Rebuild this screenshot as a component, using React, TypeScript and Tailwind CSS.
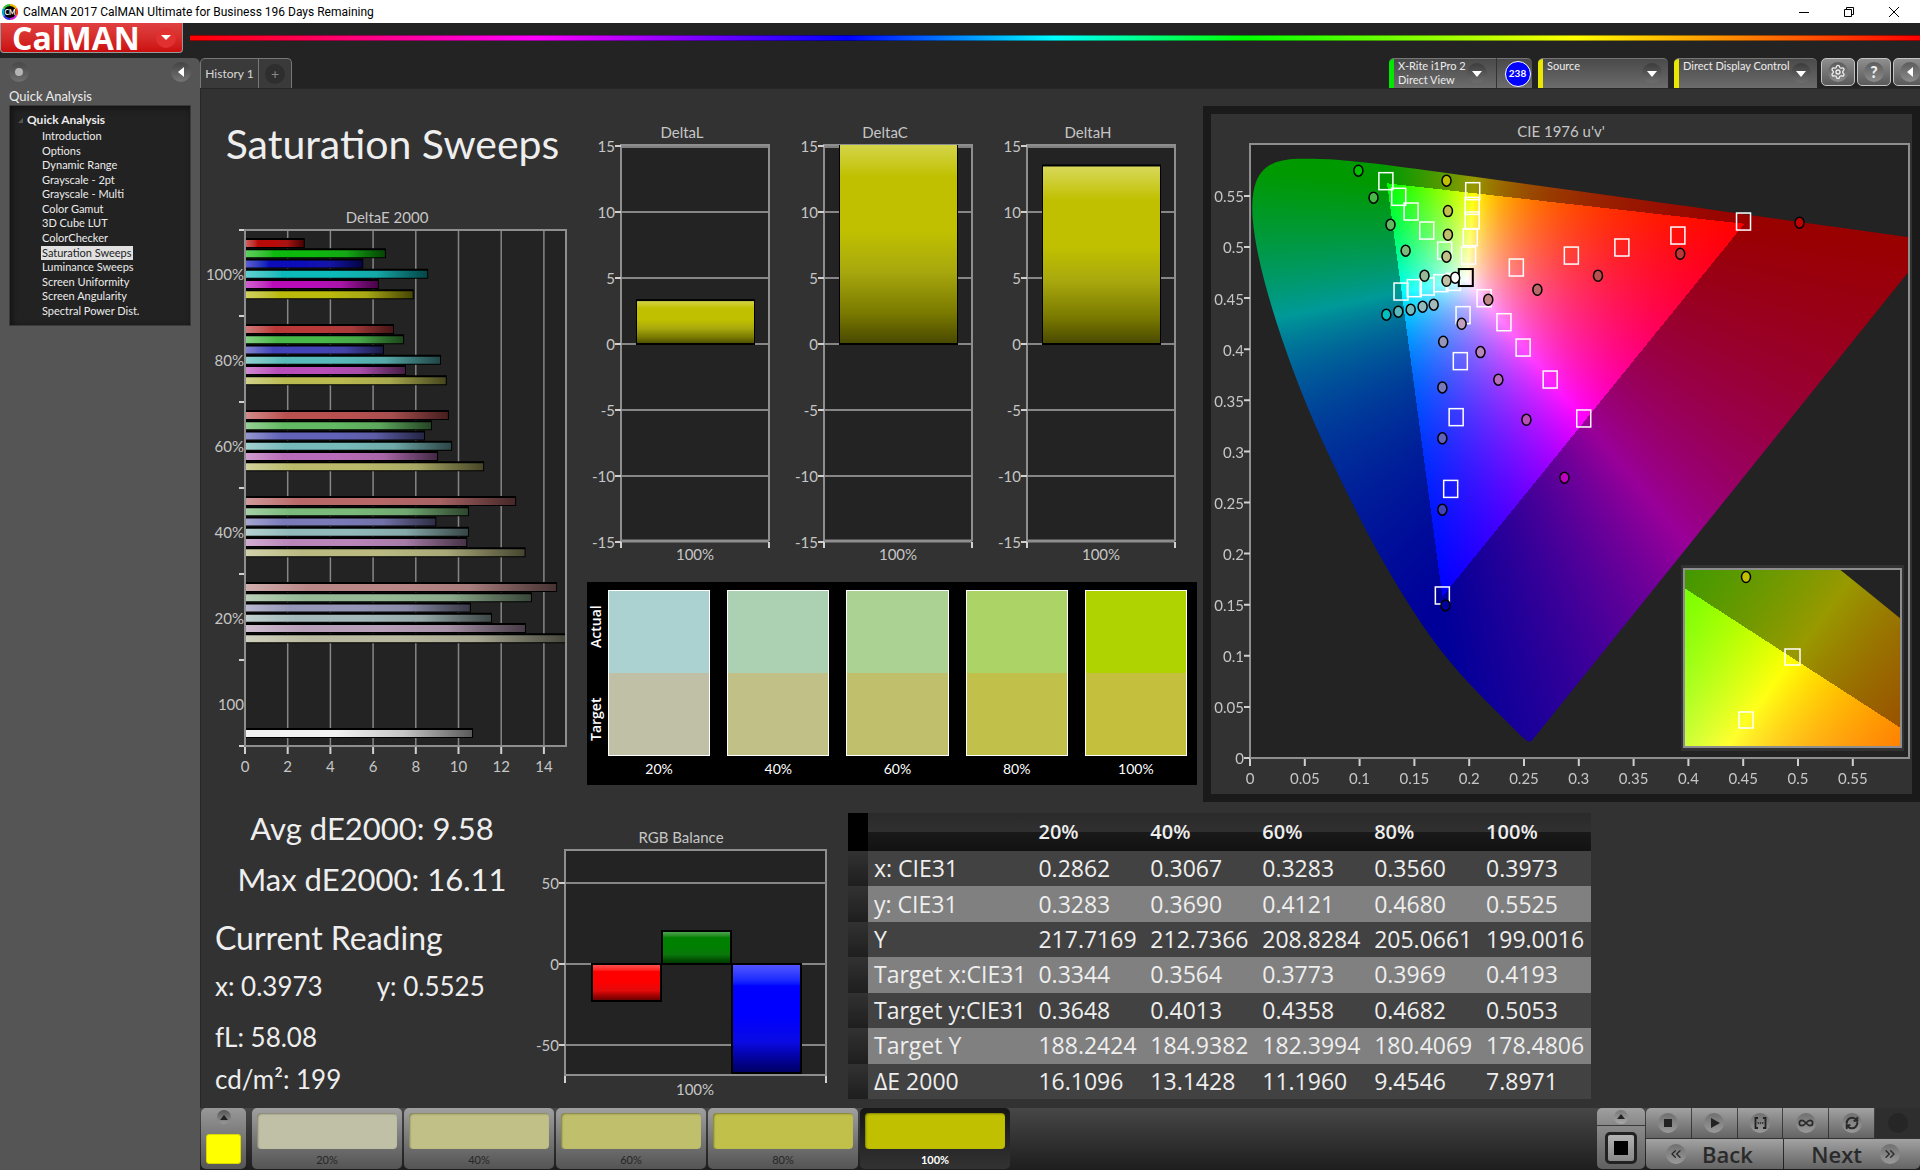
import { useEffect, useRef } from "react"
import type { ReactNode } from "react"
import { Settings, Infinity as InfinityIcon, RefreshCw, ChevronsLeft, ChevronsRight } from "lucide-react"

const NAV_ITEMS = [
  "Introduction",
  "Options",
  "Dynamic Range",
  "Grayscale - 2pt",
  "Grayscale - Multi",
  "Color Gamut",
  "3D Cube LUT",
  "ColorChecker",
  "Saturation Sweeps",
  "Luminance Sweeps",
  "Screen Uniformity",
  "Screen Angularity",
  "Spectral Power Dist.",
]

interface SweepGroup {
  label: string
  bars: { color: string; value: number }[]
}

// one group per saturation level, bars in R G B C M Y order
const SWEEPS: SweepGroup[] = [
  {
    label: "100%",
    bars: [
      { color: "#b90a0a", value: 2.8 },
      { color: "#0cb90c", value: 6.6 },
      { color: "#0c0cb9", value: 5.54 },
      { color: "#0cbaba", value: 8.58 },
      { color: "#b90cb9", value: 6.27 },
      { color: "#baba0c", value: 7.9 },
    ],
  },
  {
    label: "80%",
    bars: [
      { color: "#b93838", value: 6.98 },
      { color: "#48b948", value: 7.45 },
      { color: "#4444b9", value: 6.51 },
      { color: "#58baba", value: 9.18 },
      { color: "#b94eb9", value: 7.54 },
      { color: "#baba50", value: 9.45 },
    ],
  },
  {
    label: "60%",
    bars: [
      { color: "#b95050", value: 9.55 },
      { color: "#62b962", value: 8.76 },
      { color: "#6262b9", value: 8.43 },
      { color: "#76baba", value: 9.7 },
      { color: "#b96cb9", value: 9.04 },
      { color: "#baba6a", value: 11.2 },
    ],
  },
  {
    label: "40%",
    bars: [
      { color: "#b96868", value: 12.7 },
      { color: "#7aba7a", value: 10.49 },
      { color: "#7a7ab9", value: 8.96 },
      { color: "#92baba", value: 10.49 },
      { color: "#b986b9", value: 10.41 },
      { color: "#baba82", value: 13.14 },
    ],
  },
  {
    label: "20%",
    bars: [
      { color: "#b98686", value: 14.62 },
      { color: "#96ba96", value: 13.44 },
      { color: "#9696b9", value: 10.58 },
      { color: "#a4baba", value: 11.57 },
      { color: "#b99eb9", value: 13.16 },
      { color: "#babaa0", value: 16.11 },
    ],
  },
]

const SWATCHES = [
  { level: "20%", actual: "#abd1d0", target: "#c0c0a6" },
  { level: "40%", actual: "#abd1b2", target: "#c1c086" },
  { level: "60%", actual: "#abd193", target: "#c0bf6b" },
  { level: "80%", actual: "#abd365", target: "#c0c04b" },
  { level: "100%", actual: "#aed300", target: "#c4c03d" },
]

const PATCHES = [
  { level: "20%", color: "#c0c0a6" },
  { level: "40%", color: "#c1c086" },
  { level: "60%", color: "#c0bf6b" },
  { level: "80%", color: "#c0c04b" },
  { level: "100%", color: "#c0c000" },
]

const TABLE_ROWS = [
  ["x: CIE31", "0.2862", "0.3067", "0.3283", "0.3560", "0.3973"],
  ["y: CIE31", "0.3283", "0.3690", "0.4121", "0.4680", "0.5525"],
  ["Y", "217.7169", "212.7366", "208.8284", "205.0661", "199.0016"],
  ["Target x:CIE31", "0.3344", "0.3564", "0.3773", "0.3969", "0.4193"],
  ["Target y:CIE31", "0.3648", "0.4013", "0.4358", "0.4682", "0.5053"],
  ["Target Y", "188.2424", "184.9382", "182.3994", "180.4069", "178.4806"],
  ["ΔE 2000", "16.1096", "13.1428", "11.1960", "9.4546", "7.8971"],
]

type Point = [number, number]

// spectral locus, CIE 1931 x y
const LOCUS: Point[] = [
  [0.1741, 0.005], [0.1726, 0.0048], [0.1714, 0.0051], [0.1689, 0.0069], [0.1644, 0.0109],
  [0.1566, 0.0177], [0.151, 0.0227], [0.144, 0.0297], [0.1355, 0.0399], [0.1241, 0.0578],
  [0.1096, 0.0868], [0.0913, 0.1327], [0.0687, 0.2007], [0.0454, 0.295], [0.0235, 0.4127],
  [0.0082, 0.5384], [0.0039, 0.6548], [0.0139, 0.7502], [0.0389, 0.812], [0.0743, 0.8338],
  [0.1142, 0.8262], [0.1547, 0.8059], [0.1929, 0.7816], [0.2296, 0.7543], [0.3016, 0.6923],
  [0.3731, 0.6245], [0.4441, 0.5547], [0.5125, 0.4866], [0.5752, 0.4242], [0.627, 0.3725],
  [0.6915, 0.3083], [0.7347, 0.2653],
]

// u' v' coordinates
const TARGETS: Point[] = [
  [0.124, 0.5649], [0.1357, 0.5496], [0.147, 0.5352], [0.1613, 0.5166], [0.1776, 0.497],
  [0.2032, 0.5551], [0.2027, 0.5407], [0.2027, 0.5264], [0.201, 0.5101], [0.1994, 0.4921],
  [0.1378, 0.4569], [0.1499, 0.4602], [0.1617, 0.4618], [0.1742, 0.4651], [0.1856, 0.4664],
  [0.243, 0.4804], [0.2932, 0.4921], [0.3393, 0.5], [0.3904, 0.5117], [0.4503, 0.5254],
  [0.2136, 0.4504], [0.2317, 0.4269], [0.2492, 0.4021], [0.2739, 0.3708], [0.3045, 0.3327],
  [0.1944, 0.4338], [0.1919, 0.3888], [0.1881, 0.334], [0.1831, 0.2638], [0.1755, 0.1595],
]

const READINGS: { at: Point; color: string }[] = [
  { at: [0.0989, 0.5747], color: "#00c000" },
  { at: [0.1127, 0.5483], color: "#48b948" },
  { at: [0.1282, 0.5218], color: "#62b962" },
  { at: [0.142, 0.4964], color: "#7aba7a" },
  { at: [0.1592, 0.4719], color: "#96ba96" },
  { at: [0.1793, 0.5649], color: "#c0c000" },
  { at: [0.1806, 0.5352], color: "#c0c04b" },
  { at: [0.1806, 0.512], color: "#c0bf6b" },
  { at: [0.1793, 0.4905], color: "#c1c086" },
  { at: [0.1793, 0.467], color: "#c0c0a6" },
  { at: [0.1872, 0.47], color: "#ffffff" },
  { at: [0.5014, 0.5238], color: "#c00000" },
  { at: [0.3925, 0.4934], color: "#b93838" },
  { at: [0.3175, 0.4719], color: "#b95050" },
  { at: [0.2622, 0.4582], color: "#b96868" },
  { at: [0.2174, 0.4484], color: "#c08686" },
  { at: [0.1244, 0.4338], color: "#00c0c0" },
  { at: [0.1353, 0.4367], color: "#58baba" },
  { at: [0.1466, 0.4387], color: "#76baba" },
  { at: [0.1575, 0.4416], color: "#92baba" },
  { at: [0.1676, 0.4436], color: "#a4baba" },
  { at: [0.2869, 0.2743], color: "#c000c0" },
  { at: [0.2522, 0.331], color: "#b94eb9" },
  { at: [0.2266, 0.3702], color: "#b96cb9" },
  { at: [0.2103, 0.3972], color: "#b986b9" },
  { at: [0.1931, 0.4249], color: "#c0a0c0" },
  { at: [0.1784, 0.1493], color: "#0000a0" },
  { at: [0.1755, 0.243], color: "#4444b9" },
  { at: [0.1755, 0.3128], color: "#6262b9" },
  { at: [0.1755, 0.3626], color: "#7a7ab9" },
  { at: [0.1763, 0.4073], color: "#9696b9" },
]

const xyToUv = ([x, y]: Point): Point => {
  const d = 3 - 2 * x + 12 * y
  return [(4 * x) / d, (9 * y) / d]
}

const uvToXy = ([u, v]: Point): Point => {
  const d = 6 * u - 16 * v + 12
  return [(9 * u) / d, (4 * v) / d]
}

interface ChromaticityProps {
  width: number
  height: number
  // chart units at the left/bottom edge and units covered by the chart
  origin: Point
  span: Point
  space: "uv" | "xy"
}

// Fills the locus with its colours, dimmed outside the Rec.709 triangle
function Chromaticity({ width, height, origin, span, space }: ChromaticityProps) {
  const ref = useRef<HTMLCanvasElement>(null)

  useEffect(() => {
    const ctx = ref.current?.getContext("2d")
    if (!ctx) return
    const image = ctx.createImageData(width, height)
    for (let j = 0; j < height; j++) {
      for (let i = 0; i < width; i++) {
        const p: Point = [
          origin[0] + ((i + 0.5) / width) * span[0],
          origin[1] + (1 - (j + 0.5) / height) * span[1],
        ]
        const [x, y] = space === "uv" ? uvToXy(p) : p
        const z = 1 - x - y
        const r = 3.2406 * x - 1.5372 * y - 0.4986 * z
        const g = -0.9689 * x + 1.8758 * y + 0.0415 * z
        const b = 0.0557 * x - 0.204 * y + 1.057 * z
        const max = Math.max(r, g, b)
        const dim = Math.min(r, g, b) < 0 ? 153 : 255
        const o = (j * width + i) * 4
        image.data[o] = (dim * r) / max
        image.data[o + 1] = (dim * g) / max
        image.data[o + 2] = (dim * b) / max
        image.data[o + 3] = 255
      }
    }
    ctx.putImageData(image, 0, 0)

    const outline = LOCUS.map((pt) => {
      const [a, b] = space === "uv" ? xyToUv(pt) : pt
      return [((a - origin[0]) / span[0]) * width, (1 - (b - origin[1]) / span[1]) * height]
    })
    ctx.globalCompositeOperation = "destination-in"
    ctx.beginPath()
    outline.forEach(([a, b], i) => {
      const next = outline[i + 1]
      if (i === 0) ctx.moveTo(a, b)
      else if (next) ctx.quadraticCurveTo(a, b, (a + next[0]) / 2, (b + next[1]) / 2)
      else ctx.lineTo(a, b)
    })
    ctx.closePath()
    ctx.fill()
    ctx.globalCompositeOperation = "source-over"
  }, [width, height, origin, span, space])

  return <canvas ref={ref} width={width} height={height} className="block h-full w-full" />
}

function Gradient({ id, color, vertical }: { id: string; color: string; vertical?: boolean }) {
  return (
    <linearGradient id={id} x1="0" y1="0" x2={vertical ? "0" : "1"} y2={vertical ? "1" : "0"}>
      <stop offset="0" stopColor={`color-mix(in srgb, ${color} 67%, white)`} />
      <stop offset="0.2" stopColor={color} />
      <stop offset="0.48" stopColor={color} />
      <stop offset="0.72" stopColor={`color-mix(in srgb, ${color} 85%, #444)`} />
      <stop offset="1" stopColor={`color-mix(in srgb, ${color} 38%, black)`} />
    </linearGradient>
  )
}

interface LabelProps {
  x: number
  y: number
  anchor?: "start" | "middle" | "end"
  children: ReactNode
}

function Label({ x, y, anchor = "middle", children }: LabelProps) {
  return (
    <text x={x} y={y} dy="0.36em" textAnchor={anchor} fill="#c6c6c6">
      {children}
    </text>
  )
}

const chartClass = "block h-auto w-full text-[15px]"

function DeltaEChart() {
  const unit = 21.35
  const left = 44
  const top = 24
  const bottom = 540
  const right = 365
  return (
    <svg viewBox="0 0 379 575" className={chartClass} role="img" aria-label="DeltaE 2000">
      <Label x={186} y={12}>DeltaE 2000</Label>
      <rect x={left} y={top} width={right - left} height={bottom - top} fill="#232323" />
      {[2, 4, 6, 8, 10, 12, 14].map((t) => (
        <path key={t} d={`M${left + t * unit} ${top}V${bottom}`} stroke="#868686" strokeWidth={1.5} />
      ))}
      {SWEEPS.map((group, gi) =>
        group.bars.map((bar, bi) => {
          const id = `de-${gi}-${bi}`
          const w = Math.min(bar.value * unit, right - left)
          return (
            <g key={id}>
              <Gradient id={id} color={bar.color} />
              <rect x={left} y={top + 8 + gi * 86 + bi * 10.25} width={w} height={10} fill="#000" />
              <rect
                x={left + 1}
                y={top + 10 + gi * 86 + bi * 10.25}
                width={w - 2}
                height={7}
                fill={`url(#${id})`}
              />
            </g>
          )
        })
      )}
      <linearGradient id="de-white">
        <stop offset="0.4" stopColor="#f2f2f2" />
        <stop offset="0.7" stopColor="#c4c4c4" />
        <stop offset="1" stopColor="#5a5a5a" />
      </linearGradient>
      <rect x={left} y={522} width={228} height={10} fill="#000" />
      <rect x={left + 1} y={524} width={226} height={7} fill="url(#de-white)" />
      <rect x={left} y={top} width={right - left} height={bottom - top} fill="none" stroke="#8e8e8e" strokeWidth={2} />
      {[0, 1, 2, 3, 4, 5, 6].map((t) => (
        <path key={t} d={`M${left - 6} ${top + t * 86}h5`} stroke="#d0d0d0" strokeWidth={2} />
      ))}
      {["100%", "80%", "60%", "40%", "20%", "100"].map((t, i) => (
        <Label key={t} x={left - 1} y={top + 45 + i * 86} anchor="end">{t}</Label>
      ))}
      {[0, 2, 4, 6, 8, 10, 12, 14].map((t) => (
        <g key={t}>
          <path d={`M${left + t * unit} ${bottom + 1}v7`} stroke="#d0d0d0" strokeWidth={2} />
          <Label x={left + t * unit} y={bottom + 21}>{t}</Label>
        </g>
      ))}
    </svg>
  )
}

function DeltaChart({ title, value }: { title: string; value: number }) {
  const y = (v: number) => 224 - v * 13.2
  const clipped = value > 15
  const barTop = clipped ? 25 : y(value)
  const fillTop = clipped ? 25 : barTop + 2
  const id = `bar-${title}`
  return (
    <svg viewBox="0 0 203 450" className={chartClass} role="img" aria-label={title}>
      <linearGradient id={id} x1="0" y1={y(value)} x2="0" y2={224} gradientUnits="userSpaceOnUse">
        <stop offset="0" stopColor="#dada60" />
        <stop offset="0.2" stopColor="#c0c000" />
        <stop offset="0.46" stopColor="#c0c000" />
        <stop offset="0.65" stopColor="#a8a80e" />
        <stop offset="0.85" stopColor="#7a7a00" />
        <stop offset="1" stopColor="#484800" />
      </linearGradient>
      <Label x={102} y={13}>{title}</Label>
      <rect x={41} y={25} width={148} height={396} fill="#232323" />
      <path d="M41 26h148" stroke="#808080" strokeWidth={4} />
      {[10, 5, 0, -5, -10].map((t) => (
        <path key={t} d={`M41 ${y(t)}h148`} stroke="#868686" strokeWidth={2} />
      ))}
      <path d="M41 421h148" stroke="#8e8e8e" strokeWidth={3} />
      <path d="M41 421V25H189V421" fill="none" stroke="#8e8e8e" strokeWidth={2} />
      <rect x={56} y={barTop} width={119} height={225 - barTop} fill="#000" />
      <rect x={57} y={fillTop} width={117} height={223 - fillTop} fill={`url(#${id})`} />
      <path d="M41 422v6M189 422v6" stroke="#d0d0d0" strokeWidth={2} />
      {[15, 10, 5, 0, -5, -10, -15].map((t) => (
        <g key={t}>
          <path d={`M35 ${y(t)}h6`} stroke="#d0d0d0" strokeWidth={2} />
          <Label x={35} y={y(t) + 1} anchor="end">{t}</Label>
        </g>
      ))}
      <Label x={115} y={435}>100%</Label>
    </svg>
  )
}

function RgbBalance() {
  return (
    <svg viewBox="-10 0 310 275" className={chartClass} role="img" aria-label="RGB Balance">
      <Gradient id="rgb-r" color="#ff0000" vertical />
      <Gradient id="rgb-g" color="#008000" vertical />
      <Gradient id="rgb-b" color="#0000ff" vertical />
      <Label x={140} y={12}>RGB Balance</Label>
      <rect x={24} y={24} width={261} height={225} fill="#232323" stroke="#8e8e8e" strokeWidth={2} />
      {[50, 0, -50].map((t) => (
        <g key={t}>
          <path d={`M24 ${138 - t * 1.62}h261`} stroke="#868686" strokeWidth={2} />
          <path d={`M18 ${138 - t * 1.62}h6`} stroke="#d0d0d0" strokeWidth={2} />
          <Label x={18} y={139 - t * 1.62} anchor="end">{t}</Label>
        </g>
      ))}
      <rect x={51} y={138} width={69} height={37} fill="url(#rgb-r)" stroke="#000" strokeWidth={2} />
      <rect x={121} y={105} width={69} height={33} fill="url(#rgb-g)" stroke="#000" strokeWidth={2} />
      <rect x={191} y={138} width={69} height={109} fill="url(#rgb-b)" stroke="#000" strokeWidth={2} />
      <path d="M24 250v7M285 250v7" stroke="#d0d0d0" strokeWidth={2} />
      <Label x={154} y={264}>100%</Label>
    </svg>
  )
}

const UV_ORIGIN: Point = [0, 0]
const UV_SPAN: Point = [0.601, 0.601]
const XY_SPAN: Point = [0.1031, 0.1038]
const XY_ORIGIN: Point = [0.4193 - 0.0516, 0.5053 - 0.0519]

function CieChart() {
  const px = (u: number) => 39 + u * 1096
  const py = (v: number) => 644 - v * 1022
  const ticks = Array.from({ length: 12 }, (_, i) => i * 0.05)
  return (
    <svg viewBox="0 0 701 680" className={chartClass} role="img" aria-label="CIE 1976 u'v'">
      <Label x={350} y={18}>CIE 1976 u'v'</Label>
      <rect x={39} y={30} width={659} height={614} fill="#232323" />
      <foreignObject x={39} y={30} width={659} height={614}>
        <Chromaticity width={659} height={614} origin={UV_ORIGIN} span={UV_SPAN} space="uv" />
      </foreignObject>
      <rect x={39} y={30} width={659} height={614} fill="none" stroke="#8e8e8e" strokeWidth={2} />
      {ticks.map((t) => (
        <g key={t}>
          <path d={`M${px(t)} 645v7M39 ${py(t)}h-6`} stroke="#d0d0d0" strokeWidth={2} />
          <Label x={px(t)} y={665}>{Number(t.toFixed(2))}</Label>
          <Label x={33} y={py(t) + 1} anchor="end">{Number(t.toFixed(2))}</Label>
        </g>
      ))}
      {TARGETS.map(([u, v]) => (
        <rect key={`${u}-${v}`} x={px(u) - 7} y={py(v) - 8} width={14} height={17} fill="none" stroke="#fff" strokeWidth={1.5} />
      ))}
      <rect x={px(0.1969) - 7} y={py(0.4706) - 8} width={14} height={17} fill="none" stroke="#000" strokeWidth={2} />
      {READINGS.map(({ at, color }) => (
        <ellipse key={color + at[0]} cx={px(at[0])} cy={py(at[1])} rx={4.5} ry={5.5} fill={color} stroke="#000" strokeWidth={1.5} />
      ))}
      <rect x={470} y={451} width={223} height={186} fill="#323232" />
      <rect x={472} y={454} width={219} height={180} fill="#232323" />
      <foreignObject x={473} y={455} width={217} height={178}>
        <Chromaticity width={217} height={178} origin={XY_ORIGIN} span={XY_SPAN} space="xy" />
      </foreignObject>
      <rect x={473} y={455} width={217} height={178} fill="none" stroke="#8e8e8e" strokeWidth={2} />
      <rect x={574} y={535} width={15} height={16} fill="none" stroke="#fff" strokeWidth={1.5} />
      <rect x={528} y={598} width={14} height={16} fill="none" stroke="#fff" strokeWidth={1.5} />
      <ellipse cx={535} cy={463} rx={4.5} ry={5.5} fill="#c0c000" stroke="#000" strokeWidth={1.5} />
    </svg>
  )
}

function DropArrow() {
  return (
    <span className="flex h-5 w-5 shrink-0 items-center justify-center rounded-full bg-linear-to-b from-[#3c3c3c] to-[#6e6e6e]">
      <svg viewBox="0 0 10 6" className="mt-0.5 w-2.5" fill="#fff">
        <path d="M0 0h10L5 6z" />
      </svg>
    </span>
  )
}

function DeviceButton({ strip, lines, className }: { strip: string; lines: string[]; className: string }) {
  return (
    <button
      className={`flex h-[30px] items-start overflow-hidden rounded-t-[5px] border-t border-[#777] bg-linear-to-b from-[#4a4a4a] to-[#6c6c6c] text-left ${className}`}
    >
      <span className={`h-full w-[5px] shrink-0 ${strip}`} />
      <span className="flex-1 pl-1 text-[11px] leading-[14px] whitespace-nowrap text-[#ececec]">
        {lines.map((l) => (
          <span key={l} className="block">{l}</span>
        ))}
      </span>
      <span className="mt-1 mr-1.5">
        <DropArrow />
      </span>
    </button>
  )
}

function SquareButton({ label, children }: { label: string; children: ReactNode }) {
  return (
    <button
      aria-label={label}
      className="flex h-7 w-[34px] shrink-0 items-center justify-center rounded-[5px] border border-[#c4c4c4] bg-linear-to-b from-[#8f8f8f] to-[#5a5a5a]"
    >
      <span className="flex h-5 w-5 items-center justify-center rounded-full bg-linear-to-b from-[#5c5c5c] to-[#8c8c8c] text-[#eee]">
        {children}
      </span>
    </button>
  )
}

function TitleBar() {
  return (
    <div className="flex h-[23px] items-center bg-white pl-[2px] text-black">
      <svg viewBox="0 0 16 16" className="h-4 w-4">
        <path d="M8 8V0a8 8 0 0 1 7 4z" fill="#e8b800" />
        <path d="M8 8l7-4a8 8 0 0 1 0 8z" fill="#f03c20" />
        <path d="M8 8l7 4a8 8 0 0 1-7 4z" fill="#d020d0" />
        <path d="M8 8v8a8 8 0 0 1-7-4z" fill="#3030e0" />
        <path d="M8 8l-7 4a8 8 0 0 1 0-8z" fill="#00a8c8" />
        <path d="M8 8L1 4a8 8 0 0 1 7-4z" fill="#30c030" />
        <circle cx="8" cy="8" r="6" fill="#000" />
        <text x="8" y="10.5" textAnchor="middle" fontSize="7" fontWeight="700" fill="#fff">CM</text>
      </svg>
      <span className="ml-[5px] flex-1 text-[12px] font-[family-name:'Roboto',sans-serif]">
        CalMAN 2017 CalMAN Ultimate for Business 196 Days Remaining
      </span>
      <div className="mr-1 flex">
        <button aria-label="Minimize" className="flex h-[22px] w-[45px] items-center justify-center">
          <svg viewBox="0 0 10 10" className="w-2.5" stroke="#000" fill="none"><path d="M0 5.5h10" /></svg>
        </button>
        <button aria-label="Restore" className="flex h-[22px] w-[45px] items-center justify-center">
          <svg viewBox="0 0 10 10" className="w-2.5" stroke="#000" fill="none">
            <path d="M.5 2.5h7v7h-7zM2.5 2.5v-2h7v7h-2" />
          </svg>
        </button>
        <button aria-label="Close" className="flex h-[22px] w-[45px] items-center justify-center">
          <svg viewBox="0 0 10 10" className="w-2.5" stroke="#000" fill="none"><path d="M0 0l10 10M10 0L0 10" /></svg>
        </button>
      </div>
    </div>
  )
}

function Sidebar() {
  return (
    <aside className="w-[200px] shrink-0 rounded-tr-md bg-[#555] px-[9px] pt-1">
      <div className="flex h-5 items-center justify-between">
        <span className="flex h-5 w-5 items-center justify-center rounded-full bg-linear-to-b from-[#484848] to-[#6e6e6e]">
          <span className="h-2 w-2 rounded-full bg-[#b4b4b4]" />
        </span>
        <button aria-label="Collapse" className="flex h-5 w-5 items-center justify-center rounded-full bg-linear-to-b from-[#444] to-[#757575]">
          <svg viewBox="0 0 6 10" className="h-2.5" fill="#fff"><path d="M6 0v10L0 5z" /></svg>
        </button>
      </div>
      <h2 className="mt-[5px] text-[13px] leading-[18px] text-[#ececec]">Quick Analysis</h2>
      <nav className="border border-[#3a3a3a] bg-[#222] pt-1.5 pb-[7px] pl-2 text-[11px] text-[#ececec] shadow-[inset_2px_2px_6px_#111]">
        <div className="flex items-center gap-1 leading-4 font-bold">
          <svg viewBox="0 0 5 5" className="w-[5px]" fill="#555"><path d="M5 0v5H0z" /></svg>
          <span className="text-[12px]">Quick Analysis</span>
        </div>
        <ul className="mt-px flex h-[189px] flex-col justify-between pl-[23px]">
          {NAV_ITEMS.map((item) => (
            <li key={item} className="flex">
              <a
                href="#"
                className={
                  item === "Saturation Sweeps"
                    ? "bg-[#e0e0e0] px-px leading-[14px] whitespace-nowrap text-[#222]"
                    : "px-px leading-[14px] whitespace-nowrap"
                }
              >
                {item}
              </a>
            </li>
          ))}
        </ul>
      </nav>
    </aside>
  )
}

function SwatchPanel() {
  return (
    <div className="mt-3 mr-1.5 ml-[7px] flex bg-black pt-2 pr-2.5 pb-2">
      <div className="w-[21px] text-[14px] leading-[18px] font-semibold font-[family-name:'Open_Sans',sans-serif] text-white">
        <span className="flex h-[74px] w-[18px] rotate-180 items-center justify-center [writing-mode:vertical-rl]">Actual</span>
        <span className="flex h-[110px] w-[18px] rotate-180 items-center justify-center [writing-mode:vertical-rl]">Target</span>
      </div>
      <div className="grid flex-1 grid-cols-5 gap-[17px]">
        {SWATCHES.map((s) => (
          <div key={s.level}>
            <div className="h-[166px] border border-white">
              <div className="h-1/2" style={{ backgroundColor: s.actual }} />
              <div className="h-1/2" style={{ backgroundColor: s.target }} />
            </div>
            <div className="pt-[5px] text-center text-[14px] leading-4 text-white">{s.level}</div>
          </div>
        ))}
      </div>
    </div>
  )
}

function ResultsTable() {
  return (
    <table className="mt-[11px] h-[286px] w-full table-fixed border-collapse text-left text-[23px] font-[family-name:'Open_Sans',sans-serif] text-[#eee]">
      <colgroup>
        <col className="w-5" />
        <col className="w-[22%]" />
        <col />
        <col />
        <col />
        <col />
        <col />
      </colgroup>
      <thead>
        <tr className="h-[38px] bg-[linear-gradient(to_bottom,#2a2a2a_0%,#303030_50%,#191919_51%,#121212_100%)] text-[20px]">
          <td className="bg-black" />
          <td />
          {SWATCHES.map((s) => (
            <th key={s.level} scope="col" className="p-0 pl-[7px] font-semibold">{s.level}</th>
          ))}
        </tr>
      </thead>
      <tbody>
        {TABLE_ROWS.map(([name, ...cells]) => (
          <tr key={name} className="h-[35px] bg-[#424242] leading-[35px] even:bg-[#808080]">
            <td className="bg-linear-to-b from-[#323232] to-[#1e1e1e]" />
            <th scope="row" className="p-0 pl-1.5 font-normal whitespace-nowrap">{name}</th>
            {cells.map((c, i) => (
              <td key={i} className="p-0 pl-[7px]">{c}</td>
            ))}
          </tr>
        ))}
      </tbody>
    </table>
  )
}

function RoundGlyph({ children }: { children?: ReactNode }) {
  return (
    <span className="flex h-5 w-5 shrink-0 items-center justify-center rounded-full bg-linear-to-b from-[#707070] to-[#9a9a9a] text-[#2a2a2a]">
      {children}
    </span>
  )
}

const transportClass = "flex flex-1 items-center bg-linear-to-b from-[#a2a2a2] to-[#646464]"

function BottomBar() {
  return (
    <footer className="flex h-[62px] items-stretch bg-linear-to-b from-[#474747] to-[#1e1e1e] pb-px pl-px">
      <button aria-label="Current patch" className="flex w-[45px] flex-col items-center justify-between rounded-[5px] bg-linear-to-b from-[#989898] to-[#565656] pt-0.5 pb-[5px]">
        <span className="flex h-3.5 w-3.5 items-center justify-center rounded-full bg-linear-to-b from-[#555] to-[#999]">
          <svg viewBox="0 0 8 5" className="w-2" fill="#222"><path d="M0 5h8L4 0z" /></svg>
        </span>
        <span className="h-[30px] w-[35px] rounded-[3px] border border-[#d8d800] bg-[#ff0]" />
      </button>
      <div className="ml-1.5 flex gap-0.5">
        {PATCHES.map((p, i) => {
          const active = i === PATCHES.length - 1
          return (
            <button
              key={p.level}
              className={
                active
                  ? "w-[150px] rounded-[5px] bg-linear-to-b from-[#161616] to-[#333] px-[5px] pt-[5px] text-[11px] font-bold text-white"
                  : "w-[150px] rounded-[5px] bg-linear-to-b from-[#a0a0a0] to-[#545454] px-[5px] pt-[5px] text-[11px] text-[#262626]"
              }
            >
              <span
                className="block h-9 rounded-[4px] shadow-[inset_1px_1px_2px_rgba(0,0,0,0.35)]"
                style={{ backgroundColor: p.color }}
              />
              <span className="block pt-0.5 leading-[18px]">{p.level}</span>
            </button>
          )
        })}
      </div>
      <div className="ml-auto flex gap-px">
        <div className="flex w-12 flex-col gap-px">
          <button aria-label="Expand" className="flex h-[17px] items-center justify-center rounded-t-[5px] bg-linear-to-b from-[#a0a0a0] to-[#888]">
            <span className="flex h-3.5 w-3.5 items-center justify-center rounded-full bg-linear-to-b from-[#777] to-[#aaa]">
              <svg viewBox="0 0 8 5" className="w-2" fill="#222"><path d="M0 5h8L4 0z" /></svg>
            </span>
          </button>
          <button aria-label="Stop" className="flex flex-1 items-center justify-center rounded-b-[5px] bg-linear-to-b from-[#8a8a8a] to-[#606060]">
            <span className="flex h-8 w-8 items-center justify-center rounded-[5px] border-[3px] border-[#222] bg-linear-to-b from-[#b4b4b4] to-[#888]">
              <span className="h-3.5 w-3.5 bg-black" />
            </span>
          </button>
        </div>
        <div className="flex w-[274px] flex-col gap-px">
          <div className="flex h-[30px] gap-px">
            <button aria-label="Stop reading" className={`${transportClass} justify-center rounded-tl-[5px]`}>
              <RoundGlyph><span className="h-2 w-2 bg-[#222]" /></RoundGlyph>
            </button>
            <button aria-label="Play" className={`${transportClass} justify-center`}>
              <RoundGlyph><svg viewBox="0 0 9 10" className="ml-0.5 h-2.5" fill="#222"><path d="M0 0l9 5-9 5z" /></svg></RoundGlyph>
            </button>
            <button aria-label="Read series" className={`${transportClass} justify-center`}>
              <RoundGlyph>
                <svg viewBox="0 0 13 12" className="h-3" stroke="#222" fill="none">
                  <path d="M4 1H1.500V11H4M9 1h2.500V11H9" strokeWidth="1.8" />
                  <path d="M3.600 6h1.400M5.800 6h1.400M8 6h1.400" strokeWidth="1.600" />
                </svg>
              </RoundGlyph>
            </button>
            <button aria-label="Continuous" className={`${transportClass} justify-center`}>
              <RoundGlyph><InfinityIcon className="h-4 w-4" strokeWidth={2.5} /></RoundGlyph>
            </button>
            <button aria-label="Refresh" className={`${transportClass} justify-center`}>
              <RoundGlyph><RefreshCw className="h-3.5 w-3.5" strokeWidth={3.5} /></RoundGlyph>
            </button>
            <div className="flex flex-1 items-center justify-center bg-[#2e2e2e]">
              <span className="h-5 w-5 rounded-full bg-[#262626]" />
            </div>
          </div>
          <div className="flex h-[30px] gap-px text-[22px] leading-[30px] font-semibold font-[family-name:'Open_Sans',sans-serif] text-[#2a2a2a]">
            <button className={`${transportClass} gap-4 rounded-bl-[5px] pl-5`}>
              <RoundGlyph><ChevronsLeft className="h-4 w-4" /></RoundGlyph>
              Back
            </button>
            <button className={`${transportClass} justify-end gap-[18px] rounded-br-[5px] pr-5`}>
              Next
              <RoundGlyph><ChevronsRight className="h-4 w-4" /></RoundGlyph>
            </button>
          </div>
        </div>
      </div>
    </footer>
  )
}

export default function App() {
  return (
    <div className="flex min-h-screen flex-col bg-[#232323] font-[family-name:'Lato',sans-serif]">
      <TitleBar />
      <header className="flex h-[35px] items-start">
        <button className="flex h-[30px] w-[183px] items-center rounded-b-[4px] border border-t-0 border-[#999] bg-linear-to-b from-[#e04040] to-[#cc0c0c] pl-[11px] text-white">
          <span className="text-[32px] leading-[28px] font-bold font-[family-name:'Open_Sans',sans-serif]">CalMAN</span>
          <span className="mr-1.5 ml-auto flex h-5 w-5 items-center justify-center rounded-full bg-[#e03030]">
            <svg viewBox="0 0 10 5" className="w-2.5" fill="#fff"><path d="M0 0h10L5 5z" /></svg>
          </span>
        </button>
        <div className="mt-3 ml-[7px] h-1.5 flex-1 border-y border-black/40 bg-[linear-gradient(to_right,#f00_0%,#f0f_20%,#00f_38%,#0ff_50%,#0f0_61%,#ff0_80%,#f00_100%)]" />
      </header>

      <div className="flex flex-1">
        <Sidebar />
        <div className="flex min-w-0 flex-1 flex-col">
          <div className="flex h-[30px] items-start">
            <div className="flex h-[30px] rounded-t-[5px] border border-b-0 border-[#777] bg-[#3a3a3a]">
              <button className="w-[58px] border-r border-[#777] text-center text-[12px] text-[#d8d8d8]">History 1</button>
              <button aria-label="Add tab" className="flex w-8 items-center justify-center">
                <span className="flex h-5 w-5 items-center justify-center rounded-full bg-[#2e2e2e] text-[14px] leading-5 text-[#888]">+</span>
              </button>
            </div>
            <div className="ml-auto flex">
              <DeviceButton strip="bg-[#00e800]" lines={["X-Rite i1Pro 2", "Direct View"]} className="w-[107px] rounded-tr-none pr-[3px]" />
              <button className="flex h-[30px] w-9 items-center justify-center rounded-tr-[5px] border-t border-l border-t-[#777] border-l-[#333] bg-linear-to-b from-[#4a4a4a] to-[#6c6c6c] pl-1.5">
                <span className="flex h-[26px] w-[26px] items-center justify-center rounded-full border border-white bg-[#00f] text-[10px] font-bold text-white">238</span>
              </button>
              <DeviceButton strip="bg-[#e8e800]" lines={["Source"]} className="ml-1.5 w-[130px]" />
              <DeviceButton strip="bg-[#e8e800]" lines={["Direct Display Control"]} className="ml-1.5 w-[143px]" />
            </div>
            <div className="ml-1 flex w-[99px] gap-0.5 overflow-hidden">
              <SquareButton label="Settings"><Settings className="h-4 w-4" /></SquareButton>
              <SquareButton label="Help"><span className="text-[16px] leading-5 font-black">?</span></SquareButton>
              <SquareButton label="Collapse panel">
                <svg viewBox="0 0 6 10" className="h-2.5" fill="#fff"><path d="M6 0v10L0 5z" /></svg>
              </SquareButton>
            </div>
          </div>

          <main className="flex-1 border-t border-l border-[#272727] bg-[#323232] text-[#eee]">
            <div className="grid grid-cols-[379fr_623fr_717fr]">
              <section className="min-w-0">
                <h1 className="h-[117px] pt-[27px] pl-1 text-center text-[41px] leading-[56px] whitespace-nowrap">
                  Saturation Sweeps
                </h1>
                <DeltaEChart />
              </section>
              <section className="min-w-0 pt-[31px]">
                <div className="grid grid-cols-3 pr-3.5">
                  <DeltaChart title="DeltaL" value={3.4} />
                  <DeltaChart title="DeltaC" value={15.8} />
                  <DeltaChart title="DeltaH" value={13.6} />
                </div>
                <SwatchPanel />
              </section>
              <section className="mt-[17px] min-w-0 border-8 border-[#1a1a1a]">
                <CieChart />
              </section>
            </div>

            <div className="grid grid-cols-[330fr_317fr_743fr_329fr]">
              <section className="min-w-0 whitespace-nowrap">
                <div className="pt-px pl-3 text-center text-[31px] leading-[51px]">
                  <p>Avg dE2000: 9.58</p>
                  <p>Max dE2000: 16.11</p>
                </div>
                <h2 className="mt-[9px] pl-3.5 text-[32px] leading-[48px]">Current Reading</h2>
                <div className="pl-3.5 text-[26px] leading-[48px]">
                  <p className="flex gap-[54px]">
                    <span>x: 0.3973</span>
                    <span>y: 0.5525</span>
                  </p>
                  <p className="mt-[3px]">fL: 58.08</p>
                  <p className="leading-[36px]">cd/m²: 199</p>
                </div>
              </section>
              <section className="min-w-0 pt-6 pr-[7px]">
                <RgbBalance />
              </section>
              <section className="min-w-0">
                <ResultsTable />
              </section>
            </div>
          </main>
          <BottomBar />
        </div>
      </div>
    </div>
  )
}
